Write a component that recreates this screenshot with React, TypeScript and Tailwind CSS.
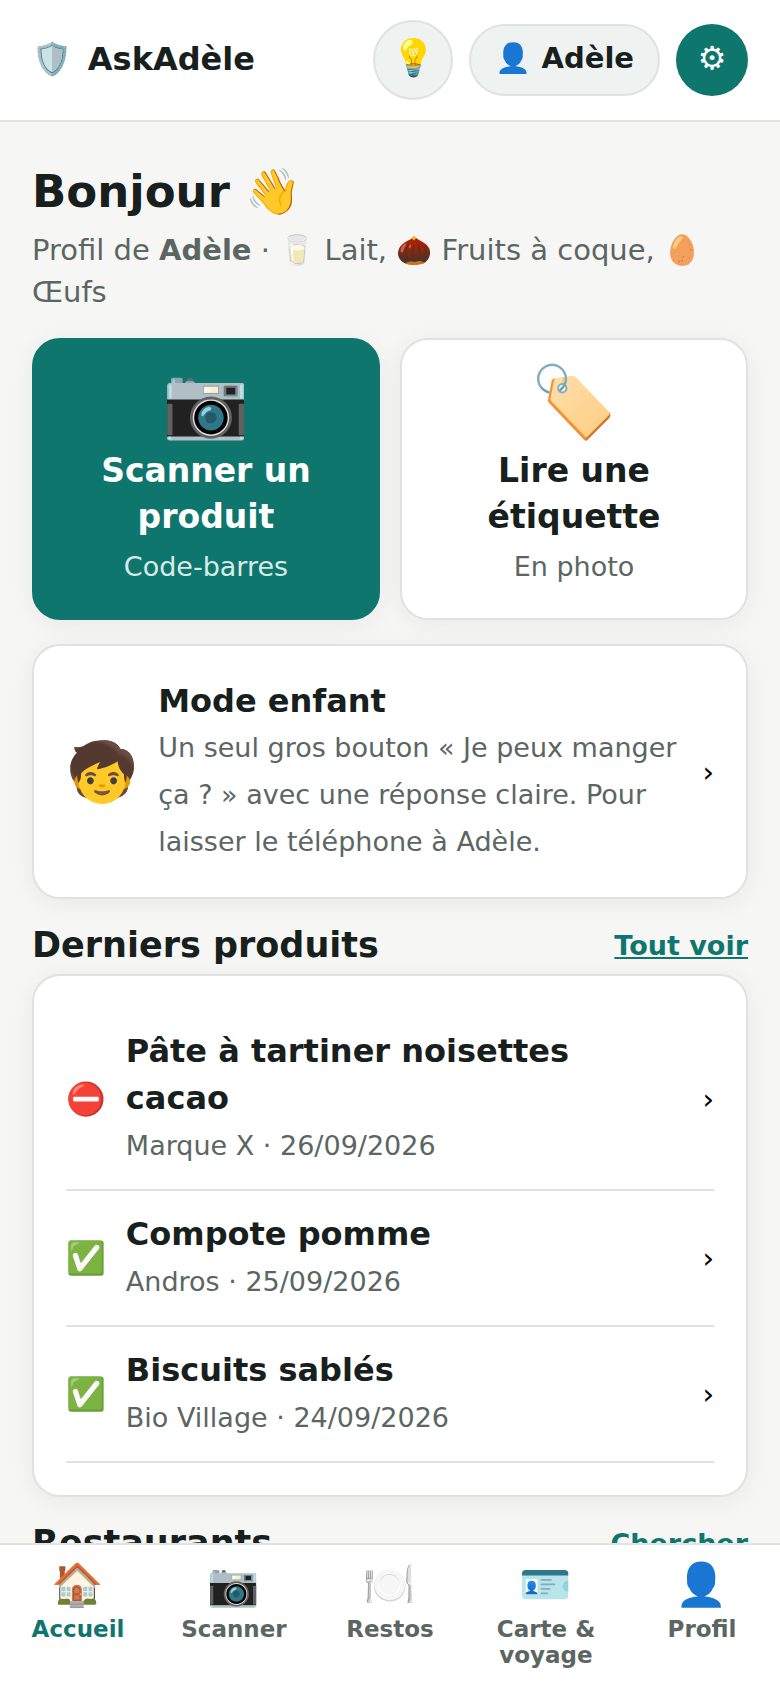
import { ReactNode } from "react";

const PRODUCTS = [
  { icon: "⛔", name: "Pâte à tartiner noisettes cacao", details: "Marque X · 26/09/2026" },
  { icon: "✅", name: "Compote pomme", details: "Andros · 25/09/2026" },
  { icon: "✅", name: "Biscuits sablés", details: "Bio Village · 24/09/2026" },
];

const TABS = [
  { icon: "🏠", label: "Accueil", active: true },
  { icon: "📷", label: "Scanner", active: false },
  { icon: "🍽️", label: "Restos", active: false },
  { icon: "🪪", label: "Carte & voyage", active: false },
  { icon: "👤", label: "Profil", active: false },
];

function Header() {
  return (
    <header className="flex shrink-0 items-center justify-between border-b-2 border-[#dfe2e0] bg-white px-8 py-5">
      <div className="flex items-center gap-4 pb-0.5 text-[32px] leading-[44px] font-bold">
        <span>🛡️</span>
        <span>AskAdèle</span>
      </div>
      <div className="flex items-center gap-4">
        <button aria-label="Astuces" className="flex size-20 items-center justify-center rounded-full border-2 border-[#dfe2e0] bg-[#eef2f1] pb-1 text-[36px]">💡</button>
        <button className="h-18 rounded-full border-2 border-[#dfe2e0] bg-[#eef2f1] px-6 pb-0.5 text-[29px] font-bold">👤 Adèle</button>
        <button aria-label="Réglages" className="flex size-18 items-center justify-center rounded-full bg-[#0f766e] pb-1 text-[32px] text-white">⚙</button>
      </div>
    </header>
  );
}

function ScanButton({ icon, title, hint, primary }: { icon: string; title: string; hint: string; primary?: boolean }) {
  return (
    <button
      className={
        "flex flex-col items-center rounded-[28px] border-2 px-8 pt-7 pb-8 text-center shadow-[0_4px_24px_rgba(0,0,0,0.06)] " +
        (primary ? "border-[#0f766e] bg-[#0f766e] text-white" : "border-[#dfe2e0] bg-white")
      }
    >
      <span className="text-[70px] leading-[68px]">{icon}</span>
      <span className="mt-3 text-[33px] leading-[46px] font-bold">{title}</span>
      <span className={"mt-2 text-[27px] leading-[38px] " + (primary ? "text-[#d9ebe9]" : "text-[#5b6663]")}>{hint}</span>
    </button>
  );
}

function SectionTitle({ title, link }: { title: string; link: string }) {
  return (
    <div className="mt-6 mb-1.5 flex items-center justify-between">
      <h2 className="text-[35px] leading-[45px] font-bold">{title}</h2>
      <a href="#" className="text-[27px] leading-[45px] font-bold text-[#0f766e] underline">{link}</a>
    </div>
  );
}

function Card({ children }: { children: ReactNode }) {
  return (
    <div className="rounded-[28px] border-2 border-[#dfe2e0] bg-white p-8 shadow-[0_4px_24px_rgba(0,0,0,0.06)]">
      {children}
    </div>
  );
}

function App() {
  return (
    <div className="flex h-screen flex-col bg-[#f6f7f5] font-['DejaVu_Sans','Noto_Color_Emoji',sans-serif] text-[#17201d]">
      <Header />

      <main className="min-h-0 flex-1 overflow-y-auto px-8 py-8 [scrollbar-width:none]">
        <h1 className="text-[45px] leading-[75px] font-bold">Bonjour 👋</h1>
        <p className="text-[29px] leading-[42px] text-[#5b6663]">
          Profil de <strong>Adèle</strong> · 🥛 Lait, 🌰 Fruits à coque, 🥚 Œufs
        </p>

        <div className="mt-[25px] grid grid-cols-2 gap-5">
          <ScanButton icon="📷" title="Scanner un produit" hint="Code-barres" primary />
          <ScanButton icon="🏷️" title="Lire une étiquette" hint="En photo" />
        </div>

        {/* MODE ENFANT */}
        <div className="mt-6">
          <Card>
            <button className="flex w-full items-center gap-5 text-left">
              <span className="text-[58px] leading-[72px]">🧒</span>
              <span className="flex-1">
                <span className="block text-[32px] leading-[46px] font-bold">Mode enfant</span>
                <span className="block text-[27px] leading-[47px] text-[#5b6663]">
                  Un seul gros bouton « Je peux manger ça ? » avec une réponse claire. Pour laisser le téléphone à Adèle.
                </span>
              </span>
              <span className="text-[29px] leading-[46px] text-black">›</span>
            </button>
          </Card>
        </div>

        <SectionTitle title="Derniers produits" link="Tout voir" />
        <Card>
          {PRODUCTS.map((product) => (
            <button key={product.name} className="flex w-full items-center gap-5 border-b-2 border-[#dfe2e0] py-5 text-left">
              <span className="text-[32px] leading-[46px]">{product.icon}</span>
              <span className="flex-1">
                <span className="block text-[32px] leading-[47px] font-bold">{product.name}</span>
                <span className="block text-[27px] leading-[47px] text-[#5b6663]">{product.details}</span>
              </span>
              <span className="text-[29px] leading-[46px] text-black">›</span>
            </button>
          ))}
        </Card>

        <SectionTitle title="Restaurants" link="Chercher" />
      </main>

      {/* TABS */}
      <nav className="grid shrink-0 grid-cols-5 border-t-2 border-[#dfe2e0] bg-white pt-3 pb-5">
        {TABS.map((tab) => (
          <a
            key={tab.label}
            href="#"
            className={
              "flex flex-col items-center gap-1 px-4 text-center text-[23px] leading-[26px] font-bold " +
              (tab.active ? "text-[#0f766e]" : "text-[#5b6663]")
            }
          >
            <span className="text-[42px] leading-[55px] font-normal">{tab.icon}</span>
            <span>{tab.label}</span>
          </a>
        ))}
      </nav>
    </div>
  );
}

export default App;
